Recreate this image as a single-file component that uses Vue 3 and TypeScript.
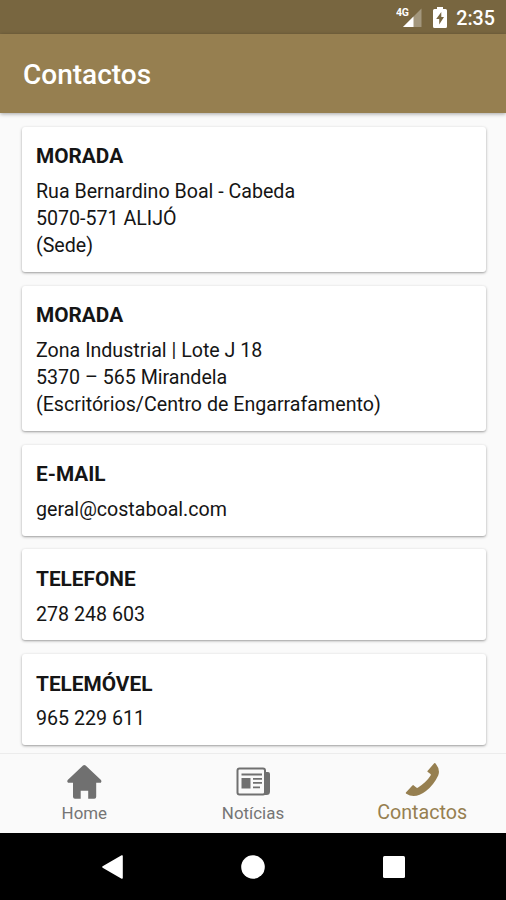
<script setup lang="ts">
interface ContactCard {
  title: string
  lines: string[]
}

const cards: ContactCard[] = [
  { title: 'MORADA', lines: ['Rua Bernardino Boal - Cabeda', '5070-571 ALIJÓ', '(Sede)'] },
  { title: 'MORADA', lines: ['Zona Industrial | Lote J 18', '5370 – 565 Mirandela', '(Escritórios/Centro de Engarrafamento)'] },
  { title: 'E-MAIL', lines: ['geral@costaboal.com'] },
  { title: 'TELEFONE', lines: ['278 248 603'] },
  { title: 'TELEMÓVEL', lines: ['965 229 611'] },
]
</script>

<template>
  <div class="screen">
    <div class="status">
      <svg class="signal" width="27" height="22" viewBox="0 0 27 22">
        <path d="M25.500 1.500v18.500H7z" fill="#fff" opacity=".32" />
        <path d="M17.500 9.500V20H7z" fill="#fff" />
        <text x="0" y="9" class="net">4G</text>
      </svg>
      <svg class="battery" width="14" height="21" viewBox="0 0 14 21">
        <path fill="#fff" fill-rule="evenodd" d="M4 0h6v2h2.500q1.500 0 1.500 1.500v16q0 1.500-1.500 1.500h-11Q0 21 0 19.500v-16Q0 2 1.500 2H4zM8.300 5L3.200 12h3v5.500L11 10H8.300z" />
      </svg>
      <span class="clock">2:35</span>
    </div>
    <header class="appbar"><h1>Contactos</h1></header>
    <main class="content">
      <section v-for="(card, i) in cards" :key="i" class="card">
        <h2>{{ card.title }}</h2>
        <p v-for="line in card.lines" :key="line">{{ line }}</p>
      </section>
    </main>
    <nav class="tabs">
      <a class="tab">
        <svg width="36" height="36" viewBox="0 0 36 36">
          <path fill="#707070" d="M18.300 1q.7 0 1.300.6L35 15.900q1 1.300-.1 2.800H30.200v14q0 2-2 2h-6v-8h-7.500v8H9q-2 0-2-2v-14H2q-1.500-1.500-.3-2.800L17 1.600q.6-.6 1.300-.6z" />
        </svg>
        <span>Home</span>
      </a>
      <a class="tab">
        <svg width="36" height="36" viewBox="0 0 36 36">
          <path fill="#707070" d="M30.500 8H33q2 0 2 2v17.500Q35 31 31.500 31H27q3.500-.5 3.500-4z" />
          <rect x="2.500" y="4.500" width="27.500" height="26" rx="2" fill="#fafafa" stroke="#707070" stroke-width="2" />
          <path fill="#707070" d="M6.500 9.500h20.500v2H6.500zM6.500 14h9v10.500h-9zM18 14h9v1.800h-9zM18 18h9v1.800h-9zM18 22.500h7v1.800h-7z" />
        </svg>
        <span>Notícias</span>
      </a>
      <a class="tab active">
        <svg width="36" height="36" viewBox="0 0 36 36">
          <path fill="#967f50" d="M30.200 1.200q.7-.5 1.400.4 5 6.400 2.600 11.800Q30 22.500 22 29 11 37.500 2.300 31.800q-.9-.7-.2-1.500l6.300-6.800q.7-.7 1.400-.1l2.500 2.200q.8.700 1.800 0 8.400-5.500 12.500-12 .5-.9-.1-1.500l-2.700-2q-.8-.6-.1-1.300z" />
        </svg>
        <span>Contactos</span>
      </a>
    </nav>
    <div class="system">
      <svg width="22" height="24" viewBox="0 0 22 24"><path d="M20 1v22L1 12z" fill="#fff" stroke="#fff" stroke-width="1.600" stroke-linejoin="round" /></svg>
      <svg width="24" height="24" viewBox="0 0 24 24"><circle cx="12" cy="12" r="11.800" fill="#fff" /></svg>
      <svg width="22" height="22" viewBox="0 0 22 22"><rect width="22" height="22" rx="1.500" fill="#fff" /></svg>
    </div>
  </div>
</template>

<style>
body { margin: 0; background: #000; }
</style>

<style scoped>
.screen {
  width: 506px;
  height: 900px;
  overflow: hidden;
  display: flex;
  flex-direction: column;
  background: #fafafa;
  color: #151515;
  font-family: Roboto, "Liberation Sans", sans-serif;
}
.status {
  flex: none;
  height: 34px;
  box-sizing: border-box;
  padding: 1px 11px 0 0;
  background: #786640;
  display: flex;
  justify-content: flex-end;
  align-items: center;
}
.signal { margin: 0 10px 0 0; }
.battery { margin-right: 9px; }
.net { font: 700 10.500px Roboto, sans-serif; fill: #fff; letter-spacing: -.2px; }
.clock { color: #fff; font-size: 19.700px; font-weight: 500; line-height: 34px; padding-top: 2px; }
.appbar {
  position: relative;
  z-index: 1;
  flex: none;
  height: 79px;
  display: flex;
  align-items: center;
  padding-left: 23px;
  background: #967f50;
  box-shadow: 0 1px 4px rgba(0, 0, 0, .35);
}
h1 { margin: 3px 0 0; font-size: 28px; font-weight: 500; line-height: 36px; color: #fff; }
.content {
  flex: 1;
  min-height: 0;
  overflow: hidden;
  padding: 13.500px 20px 0 22px;
  display: flex;
  flex-direction: column;
  gap: 13.700px;
}
.card {
  flex: none;
  box-sizing: border-box;
  padding: 16.700px 14px 12.600px;
  background: #fff;
  border-radius: 3px;
  box-shadow: 0 1px 3px rgba(0, 0, 0, .32), 0 1px 1px rgba(0, 0, 0, .08);
}
h2 { margin: 0 0 7.500px; font-size: 20.800px; line-height: 27px; font-weight: 700; }
p { margin: 0; font-size: 19.640px; line-height: 27.200px; white-space: nowrap; }
.tabs {
  flex: none;
  height: 80px;
  box-sizing: border-box;
  border-top: 1px solid #ececec;
  display: grid;
  grid-template-columns: repeat(3, 1fr);
  background: #fafafa;
}
.tab {
  display: flex;
  flex-direction: column;
  align-items: center;
  padding-top: 10px;
  color: #757575;
  font-size: 16.900px;
  line-height: 20px;
}
.tab span { margin-top: 3px; }
.active { padding-top: 8px; color: #967f50; font-size: 19.700px; }
.active span { margin: 5px 0 0 1px; }
.system {
  flex: none;
  height: 67px;
  background: #000;
  display: flex;
  justify-content: center;
  align-items: center;
  gap: 117.500px;
}
</style>
